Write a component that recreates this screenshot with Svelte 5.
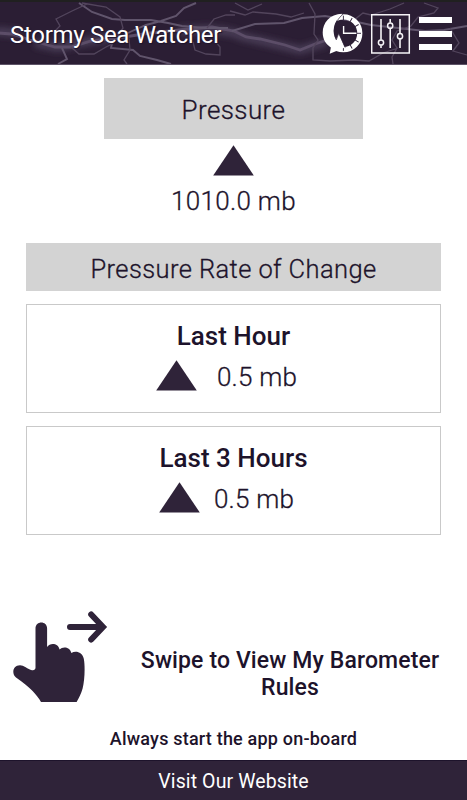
<script>
  const rates = [
    { label: 'Last Hour', value: '0.5 mb', gap: 20 },
    { label: 'Last 3 Hours', value: '0.5 mb', gap: 14 }
  ];
  const ticks = [0, 30, 60, 90, 120, 150];
</script>

{#snippet triangle()}
  <svg class="triangle" width="41" height="31" viewBox="0 0 41 31"><path d="M20.5 .3 40.8 30.5H.2Z" /></svg>
{/snippet}

<main>
  <header>
    <svg class="storm" width="467" height="65" viewBox="0 0 467 65" aria-hidden="true">
      <defs>
        <filter id="glow" x="-20%" y="-50%" width="140%" height="200%"><feGaussianBlur stdDeviation="3" /></filter>
        <filter id="soft" x="-10%" y="-20%" width="120%" height="140%"><feGaussianBlur stdDeviation=".65" /></filter>
      </defs>
      <g class="glow" filter="url(#glow)">
        <path d="M-5 31 18 33M35 43 58 48 78 43 110 38M178 31 207 29 233 33 243 37 270 43 300 50 327 42M218 30 238 34" />
      </g>
      <g class="bolts" filter="url(#soft)">
        <path class="thick" d="M-2 33 12 34 30 40 55 47 71 47 91 41 118 38 150 33 190 29 212 27 234 31 246 37 260 39 285 45 300 50 315 44 330 39" />
        <path class="mid" d="M79 3 92 12 112 19 125 20 151 20 168 23 182 26 205 28 228 28M112 43 111 48 133 50 140 56 157 60 171 64M196 3 184 8 176 16 161 21 146 25 130 32 118 39M62 48 67 59 58 64" />
        <path class="mid" d="M232 31 255 24 284 23 302 18 325 16 348 20 371 25 398 28 425 31 444 30 467 26" />
        <path d="M82 3 106 7 120 17 123 28 118 35 129 39 130 50 124 60 127 64M71 47 79 54 94 54 106 47 112 44M87 4 72 11 56 19 60 26 55 31M235 3 248 10 262 4M230 11 245 15 253 12 276 14 291 17 304 13M309 3 315 14 314 34 318 40 313 48 313 60 330 61 354 60 369 61 383 53 398 48M193 42 195 50 206 54 220 55 220 47 215 41M207 28 214 19 226 15 235 15M424 3 438 8 434 13 418 17 411 26 397 31 392 40 397 48 392 57 393 64M354 20 363 13 371 15 390 9 404 3M450 28 459 43 453 51 467 55" />
      </g>
    </svg>
    <h1>Stormy Sea Watcher</h1>
    <nav>
      <button class="history" aria-label="History">
        <svg width="42" height="42" viewBox="321.6 13 42 42">
          <circle cx="343" cy="33.3" r="16.4" fill="none" stroke="#fff" stroke-width="5.2" />
          {#each ticks as angle}
            <path d="M343 15.7V20M343 46.6V50.9" transform="rotate({angle} 343 33.3)" stroke="#2c2038" stroke-width=".9" />
          {/each}
          <path d="M343.2 26V33.2H356" fill="none" stroke="#fff" stroke-width="1.4" />
          <path d="M342 13.7C329 14 322.3 23 322.3 32.5c0 7 3.3 11.8 8.2 14.8l-1.2 6.4 15.2-6.2-6.2-14.1-2.6 6.1C331.8 33.5 331.8 22 342 13.7Z" fill="#fff" />
          <path d="M342.8 14C332.6 22.5 332.4 32.5 335.9 39.8l2.5-6.4 6.4 14.2" fill="none" stroke="#2c2038" stroke-width=".7" />
        </svg>
      </button>
      <button class="settings" aria-label="Settings">
        <svg width="40" height="40" viewBox="371 14 40 40" fill="none" stroke="#f5f3f6">
          <path d="M371.7 14.8H409.3V53H371.7Z" stroke-width="1.5" />
          <path d="M381 19V39.8M381 45.2V48M390.2 19V22.8M390.2 28.5V48M400 19V33.3M400 39V48" stroke-width="1.6" />
          <g stroke-width="1.5"><circle cx="381" cy="42.5" r="2.6" /><circle cx="390.2" cy="25.7" r="2.6" /><circle cx="400" cy="36.2" r="2.6" /></g>
        </svg>
      </button>
      <button class="menu" aria-label="Menu"><i></i><i></i><i></i></button>
    </nav>
  </header>

  <section class="pressure">
    <h2>Pressure</h2>
    {@render triangle()}
    <p class="reading">1010.0 mb</p>
  </section>

  <section class="rates">
    <h2>Pressure Rate of Change</h2>
    {#each rates as rate}
      <article>
        <h3>{rate.label}</h3>
        <div class="change" style="gap: {rate.gap}px">
          {@render triangle()}
          <span>{rate.value}</span>
        </div>
      </article>
    {/each}
  </section>

  <section class="swipe">
    <svg class="hand" width="95" height="92" viewBox="13 610 95 92">
      <path d="M41 702C37 695 31 688 16 677.5 11.5 674 12.5 665.2 20 665.2c3.5 0 7.8 3.8 12 5 1.8.5 3.5-.6 3.5-2.4V628.5c0-8 11.6-8 11.6 0V647c3-4.4 11-4 12.5 2.6 3-3.5 10.2-2.9 11.8 3.4 4.5-2.9 11.2-.5 12.4 5.8 1.5 7.8.8 22-1.2 29.7-1.4 5.5-3.8 9.5-6 13.5Z" fill="#2f2339" />
      <path d="M70 627H102M91.2 614.5 103 627 91.2 639.5" fill="none" stroke="#2f2339" stroke-width="6" stroke-linecap="round" />
    </svg>
    <p>Swipe to View My Barometer Rules</p>
  </section>
  <p class="note">Always start the app on-board</p>
  <footer><a href="#website">Visit Our Website</a></footer>
</main>

<style>
  :global(body) { margin: 0; background: #fff; }
  main {
    box-sizing: border-box; width: 467px; height: 800px; display: flex; flex-direction: column;
    overflow: hidden; background: #fff; color: #1d132b; font-family: Roboto, "Liberation Sans", sans-serif;
  }
  h1, h2, h3, p { margin: 0; font-weight: 300; }
  header {
    position: relative; box-sizing: border-box; height: 65px; flex: none; padding: 2px 15px 0 10px;
    display: flex; justify-content: space-between; align-items: flex-start;
    background: #2b1e34; border-top: 2px solid #202020; border-bottom: 1px solid #5d5367;
  }
  .storm { position: absolute; left: 0; top: -2px; z-index: 0; clip-path: inset(2px 0 1px); }
  .storm path { fill: none; stroke: #52455c; stroke-width: 1.3; }
  .storm .mid { stroke: #61546c; stroke-width: 1.9; }
  .storm .thick { stroke: #5b4e67; stroke-width: 2.8; }
  .storm .glow path { stroke: #4a3d56; stroke-width: 8; }
  h1 { position: relative; margin-top: 16px; font-size: 24px; line-height: 30px; font-weight: 400; letter-spacing: -.3px; color: #fff; white-space: nowrap; text-shadow: 1px 1px 1px #1d132b; }
  nav { position: relative; display: flex; align-items: flex-start; }
  button { padding: 0; border: 0; background: none; display: block; }
  button svg { display: block; }
  .history { margin: 9px 7px 0 0; }
  .settings { margin: 10px 8px 0 0; }
  .menu { width: 33px; margin-top: 13px; display: flex; flex-direction: column; gap: 7.5px; }
  .menu i { display: block; height: 6px; background: #fff; }
  .triangle { display: block; fill: #2f2339; flex: none; }
  .pressure { height: 178px; display: flex; flex-direction: column; align-items: center; box-sizing: border-box; padding-top: 13px; }
  h2, .reading, .change { -webkit-text-stroke: .3px #1d132b; }
  h2 { background: #d3d3d3; text-align: center; font-size: 25.5px; letter-spacing: .4px; }
  .pressure h2 { width: 259px; height: 61px; line-height: 64px; margin-bottom: 6px; font-size: 26px; }
  .reading { font-size: 26px; line-height: 30px; margin-top: 10px; letter-spacing: .3px; }
  .rates { padding: 0 26px; height: 300px; }
  .rates h2 { height: 48px; line-height: 52px; margin-bottom: 13px; }
  article { box-sizing: border-box; height: 109px; border: 1px solid #c9c9c9; padding-top: 16px; margin-bottom: 13px; }
  h3 { text-align: center; font-size: 26px; line-height: 30px; font-weight: 500; }
  .change { height: 31px; margin: 9px 14px 0 0; display: flex; justify-content: center; align-items: center; font-size: 26px; font-weight: 300; letter-spacing: .2px; }
  .change span { line-height: 30px; padding-top: 2px; }
  .swipe { margin-top: 67px; padding: 0 13px; display: flex; justify-content: space-between; }
  .swipe p { width: 302px; margin: 37px 13px 0 0; text-align: center; font-size: 23px; line-height: 27px; font-weight: 500; letter-spacing: .12px; }
  .note { text-align: center; font-size: 18px; line-height: 22px; margin-top: 26px; font-weight: 500; letter-spacing: .2px; }
  footer { margin-top: auto; box-sizing: border-box; height: 40px; border-top: 1px solid #1d132b; background: #2f2339; text-align: center; }
  footer a { display: block; color: #fff; text-decoration: none; font-size: 19.5px; line-height: 41px; letter-spacing: .1px; }
</style>
